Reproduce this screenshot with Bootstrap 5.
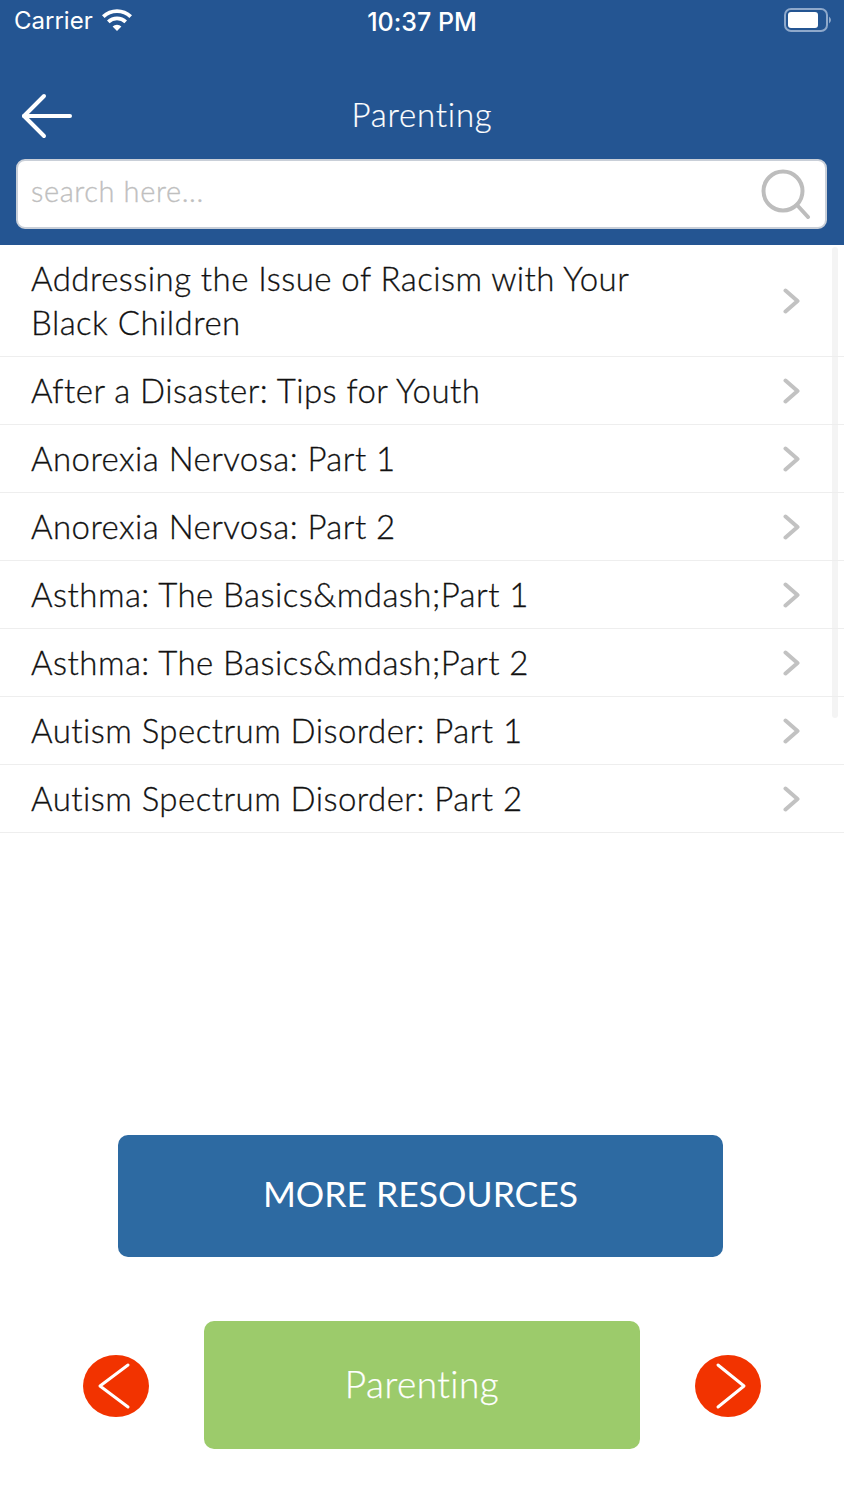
<!DOCTYPE html>
<html lang="en">
<head>
    <meta charset="UTF-8">
    <meta name="viewport" content="width=device-width, initial-scale=1.0">
    <title>Parenting</title>
    <link rel="stylesheet" href="https://cdn.jsdelivr.net/npm/bootstrap@5.3.0/dist/css/bootstrap.min.css">
    <style>
        body { font-family: Lato, "Open Sans", sans-serif; background: #fff; color: #111; min-height: 1500px; font-variant-ligatures: none; }
        .app-top { background: #245592; height: 245px; padding: 0 16px; color: #fff; }
        .status-line { height: 42px; margin: 0 -2px; font-family: Inter, Roboto, sans-serif; font-size: 24px; line-height: 42px; }
        .status-left { width: 200px; }
        .status-mid { font-weight: 500; font-size: 25px; padding-top: 1px; }
        .status-right { width: 200px; }
        .battery-icon { margin-right: -4px; }
        .title-line { height: 117px; padding-top: 28px; font-size: 33px; font-weight: 300; letter-spacing: .75px; -webkit-text-stroke: .2px #fff; position: relative; }
        .back-arrow { position: absolute; left: 5px; top: 50px; }
        .search-box { height: 70px; background: #fff; border: 2px solid #c9cfd8; border-radius: 9px; padding: 0 14px 6px 13px; margin-right: 1px; }
        .search-text { color: #bfbfbf; font-size: 29px; font-weight: 300; letter-spacing: .6px; -webkit-text-stroke: .35px #bfbfbf; }
        .search-icon { margin-top: 6px; }
        .topic-list { position: relative; }
        .topic-list .topic-row { min-height: 68px; padding: 11px 0 12px 31px; border: 0; border-bottom: 1px solid #eeeeee; border-radius: 0; font-size: 33px; font-weight: 300; line-height: 44px; letter-spacing: .45px; color: #111; -webkit-text-stroke: .3px #111; background: transparent; }
        .topic-label { width: 640px; }
        .topic-arrow { margin-right: 44px; margin-top: 2px; flex: none; }
        .scroll-thumb { position: absolute; left: 832px; top: 2px; width: 6px; height: 471px; background: #f4f4f4; border-radius: 3px; }
        .more-wrap { margin-top: 302px; }
        .more-btn { width: 605px; height: 122px; margin-right: 3px; padding-bottom: 10px; background: #2d6aa2; border: 0; border-radius: 10px; color: #fff; font-size: 35.500px; }
        .more-btn:hover { background: #2d6aa2; color: #fff; }
        .foot-line { gap: 55px; margin-top: 64px; }
        .topic-btn { width: 436px; height: 128px; padding-bottom: 8px; background: #9ccb6b; border: 0; border-radius: 10px; color: #fff; font-size: 37px; font-weight: 300; letter-spacing: .45px; -webkit-text-stroke: .25px #fff; }
        .topic-btn:hover { background: #9ccb6b; color: #fff; }
        .round-nav { width: 66px; height: 62px; flex: none; margin-top: 2px; }
    </style>
</head>
<body>
<div class="d-flex flex-column">
    <!-- Blue header -->
    <div class="app-top">
        <div class="status-line d-flex justify-content-between align-items-center">
            <div class="status-left d-flex align-items-center gap-2">
                <span>Carrier</span>
                <svg width="32" height="24" viewBox="0 0 32 24" fill="#fff"><path d="M16 22 L11.600 17.400 A6.400 6.400 0 0 1 20.400 17.400 Z"/><path d="M8.600 14.300 L6 11.500 A14.400 14.400 0 0 1 26 11.500 L23.400 14.300 A10.600 10.600 0 0 0 8.600 14.300 Z"/><path d="M3.600 9 L1 6.200 A21.600 21.600 0 0 1 31 6.200 L28.400 9 A17.800 17.800 0 0 0 3.600 9 Z"/></svg>
            </div>
            <div class="status-mid">10:37 PM</div>
            <div class="status-right d-flex justify-content-end">
                <svg class="battery-icon" width="50" height="26" viewBox="0 0 50 26"><rect x="1" y="1" width="42" height="22" rx="6" fill="none" stroke="#8fa9cb" stroke-width="2"/><rect x="4" y="4" width="30" height="16" rx="3" fill="#fff"/><path d="M45 8.500 Q49 12 45 15.500 Z" fill="#8fa9cb"/></svg>
            </div>
        </div>
        <div class="title-line d-flex justify-content-center align-items-center">
            <svg class="back-arrow" width="54" height="48" viewBox="0 0 54 48" fill="none" stroke="#fff" stroke-width="4" stroke-linecap="round" stroke-linejoin="round"><path d="M23 4 L3 24 L23 44"/><path d="M3 24 H49"/></svg>
            <span>Parenting</span>
        </div>
        <div class="search-box d-flex justify-content-between align-items-center">
            <span class="search-text">search here...</span>
            <svg class="search-icon" width="50" height="50" viewBox="0 0 50 50" fill="none" stroke="#bdbdbd" stroke-width="4" stroke-linecap="round"><circle cx="22" cy="22" r="19.500"/><path d="M36 36 L47 48"/></svg>
        </div>
    </div>

    <!-- Topic rows -->
    <div class="topic-list list-group" id="topicList">
        <div class="scroll-thumb"></div>
    </div>

    <!-- Bottom buttons -->
    <div class="d-flex justify-content-center more-wrap">
        <button class="btn more-btn">MORE RESOURCES</button>
    </div>
    <div class="foot-line d-flex justify-content-center align-items-center">
        <svg class="round-nav" viewBox="0 0 66 62"><ellipse cx="33" cy="31" rx="33" ry="31" fill="#f23300"/><path d="M45 10 L17 31 L45 52" fill="none" stroke="#fff" stroke-width="3" stroke-linecap="round" stroke-linejoin="round"/></svg>
        <button class="btn topic-btn">Parenting</button>
        <svg class="round-nav" viewBox="0 0 66 62"><ellipse cx="33" cy="31" rx="33" ry="31" fill="#f23300"/><path d="M23 10 L49 31 L23 52" fill="none" stroke="#fff" stroke-width="3" stroke-linecap="round" stroke-linejoin="round"/></svg>
    </div>
</div>

<script>
    // Fill the list, titles keep the raw entity the way the app shows it
    const topics = [
        'Addressing the Issue of Racism with Your Black Children',
        'After a Disaster: Tips for Youth',
        'Anorexia Nervosa: Part 1',
        'Anorexia Nervosa: Part 2',
        'Asthma: The Basics&mdash;Part 1',
        'Asthma: The Basics&mdash;Part 2',
        'Autism Spectrum Disorder: Part 1',
        'Autism Spectrum Disorder: Part 2'
    ];
    const topicList = document.getElementById('topicList');
    topics.forEach(title => {
        const row = document.createElement('div');
        row.className = 'list-group-item topic-row d-flex justify-content-between align-items-center';
        const label = document.createElement('div');
        label.className = 'topic-label';
        label.textContent = title;
        row.appendChild(label);
        row.insertAdjacentHTML('beforeend', '<svg class="topic-arrow" width="17" height="26" viewBox="0 0 17 26" fill="none" stroke="#c2c2c2" stroke-width="4" stroke-linecap="round" stroke-linejoin="round"><path d="M2.500 2.500 L14.500 13 L2.500 23.500"/></svg>');
        topicList.appendChild(row);
    });
</script>
</body>
</html>
